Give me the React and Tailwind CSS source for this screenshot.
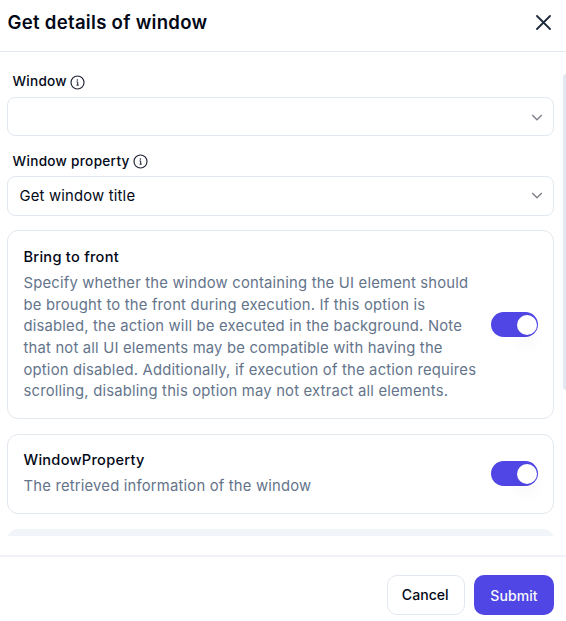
function InfoIcon() {
  return (
    <svg className="h-[15px] w-[15px] shrink-0" viewBox="0 0 15 15" fill="none" stroke="#1e2233">
      <circle cx="7.5" cy="7.5" r="6.5" strokeWidth="1.15" />
      <path d="M6.5 6.9h1.2v3.3M6.5 10.2h2.2" strokeWidth="1" />
      <circle cx="7.4" cy="4.9" r="0.75" fill="#1e2233" stroke="none" />
    </svg>
  );
}

function Chevron() {
  return (
    <svg className="h-[7px] w-3 shrink-0" viewBox="0 0 12 7" fill="none" stroke="#7c7f88" strokeWidth="1.3">
      <path d="M1.2 1l4.8 4.8L10.8 1" />
    </svg>
  );
}

function Toggle() {
  return (
    <button
      role="switch"
      aria-checked="true"
      className="mb-px flex h-[25px] w-[47.5px] shrink-0 items-center justify-end rounded-full bg-[#4f46e5] pr-[1px]"
    >
      <span className="h-5 w-5 rounded-full bg-white shadow-[0_11px_16px_-3px_rgba(0,0,0,0.07)]" />
    </button>
  );
}

function OptionCard({ title, children, className }) {
  return (
    <section
      className={`flex items-center justify-between rounded-[11px] border border-[#e2e8f0] pr-[15px] pl-[15.5px] ${className}`}
    >
      <div className="w-[460px]">
        <h2 className="text-[14.6px] leading-[20px] font-medium tracking-[0.26px] text-[#020817]">{title}</h2>
        <div className="mt-[6px] text-[14.8px] leading-[21.6px] tracking-[0.2px] whitespace-nowrap text-[#64748b]">
          {children}
        </div>
      </div>
      <Toggle />
    </section>
  );
}

export default function App() {
  return (
    <div className="flex h-[621px] w-[566px] flex-col overflow-hidden bg-white font-['Inter',sans-serif] text-[#020817]">
      <header className="flex h-[52px] shrink-0 items-center justify-between border-b border-[#e2e8f0] pr-[15px] pb-[7px] pl-[7.5px]">
        <h1 className="text-[18.6px] leading-6 font-semibold tracking-[0.28px]">Get details of window</h1>
        <svg className="h-[15px] w-[15px]" viewBox="0 0 15 15" fill="none" stroke="#1e293b" strokeWidth="1.8" strokeLinecap="round">
          <path d="M1 1l13 13M14 1L1 14" />
        </svg>
      </header>

      <main className="flex h-[484px] shrink-0 justify-between overflow-hidden">
        <div className="ml-[7px] w-[547px]">
          <div className="flex h-[45px] items-center gap-[3px] pt-[15px] pl-[5.5px]">
            <label className="-mt-[2px] text-[13.6px] leading-5 font-medium tracking-[0.24px]">Window</label>
            <InfoIcon />
          </div>
          <div className="flex h-[39px] items-center justify-end rounded-lg border border-[#e2e8f0] pt-px pr-2.5">
            <Chevron />
          </div>
          <div className="flex h-10 items-center gap-[3.5px] pt-[10px] pl-[5.5px]">
            <label className="text-[13.6px] leading-5 font-medium tracking-[0.3px]">Window property</label>
            <InfoIcon />
          </div>
          <div className="flex h-10 items-center justify-between rounded-lg border border-[#e2e8f0] pr-2.5 pb-px pl-[11.5px]">
            <span className="pt-px text-[14.8px] leading-[24px] tracking-[0.2px]">Get window title</span>
            <Chevron />
          </div>

          <OptionCard title="Bring to front" className="mt-[14px] h-[189px] pt-px">
            Specify whether the window containing the UI element should
            <br />
            be brought to the front during execution. If this option is
            <br />
            disabled, the action will be executed in the background. Note
            <br />
            that not all UI elements may be compatible with having the
            <br />
            option disabled. Additionally, if execution of the action requires
            <br />
            scrolling, disabling this option may not extract all elements.
          </OptionCard>
          <OptionCard title="WindowProperty" className="mt-[15px] h-20">
            The retrieved information of the window
          </OptionCard>
          <div className="mt-[15px] h-20 rounded-[11px] bg-[#f1f5f9]" />
        </div>
        <div className="mt-[22px] h-[316px] w-[3px] rounded-l-full bg-[#e2e8f0]" />
      </main>

      <footer className="mt-[19px] flex h-[66px] shrink-0 items-start justify-end gap-[9px] border-t-2 border-[#f0f2f7] pt-[18px] pr-3">
        <button className="h-10 w-[78.5px] rounded-[10px] border border-[#e2e8f0] pr-px text-[14.1px] font-medium">Cancel</button>
        <button className="h-10 w-20 rounded-[10px] bg-[#4f46e5] text-[14px] font-medium tracking-[0.1px] text-[#f8fafc]">Submit</button>
      </footer>
    </div>
  );
}
